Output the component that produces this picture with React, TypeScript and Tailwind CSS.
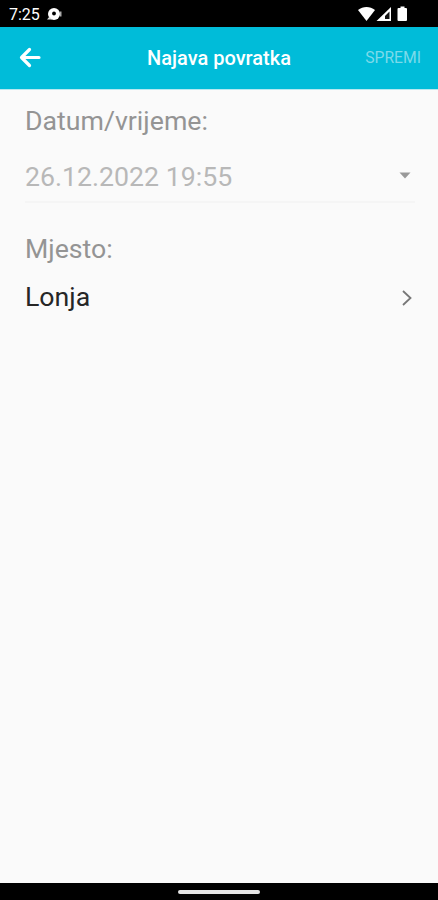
import type { ReactNode } from 'react';

function StatusBar() {
  return (
    <div className="flex h-[27px] shrink-0 items-center bg-black text-white">
      <span className="ml-[9px] mt-[2px] w-[32px] text-[16px] leading-none">7:25</span>
      <svg className="ml-[5px] mt-px" width="17" height="15" viewBox="0 0 17 15" aria-hidden="true">
        <circle cx="8" cy="7" r="6" fill="#fff" />
        <path d="M1 12.500l2.500-3 2.500 3h-5z" fill="#ddd" />
        <path d="M14 4.500h1.500v5h-1.500z" fill="#aaa" />
        <circle cx="8" cy="6.500" r="1.900" fill="#000" />
      </svg>
      <svg className="ml-auto mr-[28px] mt-px" width="53" height="18" viewBox="0 0 53 18" aria-hidden="true">
        <path d="M1 5C6 1 13 1 18 5L9.500 16z" fill="#fff" />
        <path d="M34 2v14H19.500z" fill="#fff" />
        <path d="M32.500 6.500v7.500h-4.500v-3z" fill="#111" />
        <path d="M43.500 3V1.500h4V3h1.500q1 0 1 1v11q0 1-1 1h-7.500q-1 0-1-1V4q0-1 1-1z" fill="#fff" />
      </svg>
    </div>
  );
}

function Header() {
  return (
    <header className="grid h-[62px] shrink-0 grid-cols-[1fr_auto_1fr] items-center bg-[#00bcd9] text-white">
      <button type="button" aria-label="Natrag" className="ml-[19px] w-fit">
        <svg width="23" height="22" viewBox="0 0 23 22" fill="none" stroke="#fff" strokeWidth="3.200" strokeLinecap="round" strokeLinejoin="round">
          <path d="M20 10.500H3M10.500 2.500L2.500 10.500l8 8" />
        </svg>
      </button>
      <h1 className="text-[20px] font-medium leading-6">Najava povratka</h1>
      <button type="button" disabled className="mr-[17px] justify-self-end text-[15.700px] leading-6 text-[#7cdaea]">
        SPREMI
      </button>
    </header>
  );
}

function Label({ children }: { children: ReactNode }) {
  return <div className="text-[26.700px] leading-8 text-[#949494]">{children}</div>;
}

export default function App() {
  return (
    <div className="flex h-screen flex-col bg-[#fafafa] font-['Roboto',sans-serif]">
      <StatusBar />
      <Header />

      <main className="flex-1 border-t border-[#b5e9f1] pl-[25px] pr-[23px] pt-[15px]">
        <Label>Datum/vrijeme:</Label>
        <div className="mt-[16px] flex h-[50px] items-start justify-between border-b-2 border-[#f5f5f5] pt-[8px] text-[#b8b8b8]">
          <span className="text-[26.700px] leading-8">26.12.2022 19:55</span>
          <svg className="mr-[4px] mt-[11px]" width="12" height="7" viewBox="0 0 12 7" aria-hidden="true">
            <path d="M.5.5h11L6 6.500z" fill="#999" />
          </svg>
        </div>

        <div className="mt-[30px]">
          <Label>Mjesto:</Label>
        </div>
        <div className="mt-[16px] flex items-center justify-between text-[#262626]">
          <span className="text-[26.700px] leading-8">Lonja</span>
          <svg className="mr-[3px] mt-px" width="10" height="16" viewBox="0 0 10 16" fill="none" stroke="#777" strokeWidth="1.800" aria-hidden="true">
            <path d="M1 1l7.500 7L1 15" />
          </svg>
        </div>
      </main>

      <div className="flex h-[17px] shrink-0 items-center justify-center bg-black pt-px">
        <div className="h-[4px] w-[82px] rounded-full bg-[#e4e4e4]" />
      </div>
    </div>
  );
}
